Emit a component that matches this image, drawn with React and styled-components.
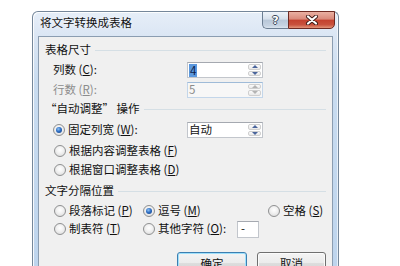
import React from 'react';
import styled, { createGlobalStyle } from 'styled-components';

const Global = createGlobalStyle`
  html, body { margin: 0; padding: 0; background: #ffffff; }
  body { font-family: "Noto Sans CJK SC", "Noto Sans", sans-serif; }
`;

const Page = styled.div`
  width: 400px;
  height: 266px;
  overflow: hidden;
  box-sizing: border-box;
  padding: 11px 0 0 32px;
`;

const Window = styled.div`
  width: 307px;
  height: 270px;
  box-sizing: border-box;
  border: 1px solid #75879a;
  border-bottom: none;
  border-radius: 6px 6px 0 0;
  background: linear-gradient(to bottom, #e6eef8 0px, #dbe6f4 24px, #c9dcf0 70px, #bdd4ed 100%);
  box-shadow: inset 1px 1px 0 rgba(255, 255, 255, 0.85), inset -1px 0 0 rgba(255, 255, 255, 0.6);
  display: flex;
  flex-direction: column;
`;

const TitleBar = styled.div`
  height: 24px;
  display: flex;
  align-items: flex-start;
  padding-left: 7px;
`;

const Title = styled.div`
  margin-top: 3px;
  font-size: 11.5px;
  line-height: 15px;
  color: #111;
  text-shadow: 0 0 4px rgba(255, 255, 255, 0.9);
`;

const Controls = styled.div`
  margin-left: auto;
  margin-right: 3px;
  margin-top: -1px;
  display: flex;
`;

const HelpBtn = styled.div`
  width: 26px;
  height: 18px;
  box-sizing: border-box;
  border: 1px solid #6c7e92;
  border-right: none;
  border-radius: 0 0 0 5px;
  background: linear-gradient(to bottom, #eef3f9 0%, #d6e0eb 45%, #b8c7d8 50%, #c6d3e2 85%, #dbe5ef 100%);
  display: flex;
  align-items: center;
  justify-content: center;
  font-family: "DejaVu Sans", sans-serif;
  font-weight: bold;
  font-size: 11px;
  color: #ffffff;
  text-shadow: 1px 0 0 #3b4a5c, -1px 0 0 #3b4a5c, 0 1px 0 #3b4a5c, 0 -1px 0 #3b4a5c;
`;

const CloseBtn = styled.div`
  width: 47px;
  height: 18px;
  box-sizing: border-box;
  border: 1px solid #6e2a22;
  border-radius: 0 0 5px 0;
  background: linear-gradient(to bottom, #eab0a2 0%, #d9897a 45%, #c4412e 50%, #c9523d 80%, #e3957a 100%);
  display: flex;
  align-items: center;
  justify-content: center;
`;

const Client = styled.div`
  flex: 1;
  margin: 0 5px;
  border: 1px solid #8b9db1;
  border-bottom: none;
  background: #f0f0f0;
  padding: 3px 5px 0 6px;
  display: flex;
  flex-direction: column;
  font-size: 11.5px;
  line-height: 1;
  color: #111;
`;

const Section = styled.div`
  height: ${p => p.h}px;
  display: flex;
  align-items: center;
  white-space: nowrap;
  &::after {
    content: "";
    flex: 1;
    height: 1px;
    margin-left: 4px;
    margin-right: 1px;
    background: #d5dfe5;
  }
`;

const FieldRow = styled.div`
  height: ${p => p.h}px;
  display: grid;
  grid-template-columns: 134px auto;
  align-items: center;
  padding-left: 8px;
`;

const RadioGrid = styled.div`
  height: ${p => p.h}px;
  display: grid;
  grid-template-columns: 89px 125px auto;
  align-items: center;
  padding-left: 9px;
`;

const Option = styled.div`
  display: flex;
  align-items: center;
  white-space: nowrap;
  grid-column: span ${p => p.span || 1};
`;

const Label = styled.span`
  white-space: nowrap;
  color: ${p => (p.disabled ? '#8c8c8c' : '#111')};
`;

const OtherLabel = styled.span`
  width: 79px;
  white-space: nowrap;
`;

const Radio = styled.span`
  width: 12px;
  height: 12px;
  box-sizing: border-box;
  border-radius: 50%;
  border: 1px solid #8f9091;
  background: radial-gradient(circle at 50% 40%, #ffffff 0%, #f2f2f2 40%, #d6d6d6 100%);
  margin-right: 3px;
  display: flex;
  align-items: center;
  justify-content: center;
  flex-shrink: 0;
  &::after {
    content: "";
    display: ${p => (p.checked ? 'block' : 'none')};
    width: 6px;
    height: 6px;
    border-radius: 50%;
    background: radial-gradient(circle at 40% 35%, #8fc3f5 0%, #2f6fc4 45%, #123a7d 100%);
  }
`;

const Field = styled.div`
  width: 76px;
  height: 16px;
  box-sizing: border-box;
  border: 1px solid ${p => (p.disabled ? '#c3d6ea' : '#c2c6cc')};
  border-top-color: ${p => (p.disabled ? '#9fbbd8' : '#a5a9b0')};
  background: ${p => (p.disabled ? '#f7f7f7' : '#ffffff')};
  display: flex;
  align-items: stretch;
`;

const FieldText = styled.div`
  flex: 1;
  display: flex;
  align-items: center;
  padding-left: 1px;
  font-size: 11.5px;
  color: ${p => (p.disabled ? '#8c8c8c' : '#111')};
`;

const Selected = styled.span`
  background: #5b98de;
  color: #0c1d4a;
  padding: 0 1px;
  line-height: 13px;
`;

const Spin = styled.div`
  width: 13px;
  display: flex;
  flex-direction: column;
  gap: 1px;
  padding: 1px 1px 1px 0;
`;

const SpinBtn = styled.div`
  flex: 1;
  border: 1px solid #cfcfcf;
  border-radius: 2px;
  background: linear-gradient(to bottom, #fbfbfb, #e9e9e9);
  display: flex;
  align-items: center;
  justify-content: center;
  &::after {
    content: "";
    width: 0;
    height: 0;
    border-left: 3px solid transparent;
    border-right: 3px solid transparent;
    ${p => (p.down ? 'border-top' : 'border-bottom')}: 3px solid ${p => (p.disabled ? '#b3b3b3' : '#4a659b')};
  }
`;

const CharBox = styled.div`
  width: 22px;
  height: 17px;
  box-sizing: border-box;
  border: 1px solid #c2c6cc;
  border-top-color: #a5a9b0;
  background: #ffffff;
  display: flex;
  align-items: center;
  padding-left: 3px;
`;

const ButtonRow = styled.div`
  margin-top: 14px;
  padding-left: 132px;
  display: flex;
  gap: 10px;
`;

const Button = styled.div`
  width: ${p => p.w}px;
  height: 23px;
  box-sizing: border-box;
  border: 1px solid ${p => (p.primary ? '#3c7fb1' : '#707070')};
  border-radius: 3px;
  background: linear-gradient(to bottom, #f4f4f4 0%, #ebebeb 50%, #dddddd 50%, #cfcfcf 100%);
  box-shadow: ${p => (p.primary ? 'inset 0 0 0 1px #9fe0fb' : 'inset 0 0 0 1px #fbfbfb')};
  display: flex;
  align-items: center;
  justify-content: center;
  font-size: 11.5px;
  color: #111;
`;

const Acc = ({ k }) => (
  <> (<u>{k}</u>)</>
);

const SpinField = ({ children, disabled }) => (
  <Field disabled={disabled}>
    <FieldText disabled={disabled}>{children}</FieldText>
    <Spin>
      <SpinBtn disabled={disabled} />
      <SpinBtn down disabled={disabled} />
    </Spin>
  </Field>
);

export default function App() {
  return (
    <>
      <Global />
      <Page>
        <Window>
          <TitleBar>
            <Title>将文字转换成表格</Title>
            <Controls>
              <HelpBtn>?</HelpBtn>
              <CloseBtn>
                <svg width="14" height="10" viewBox="0 0 14 10">
                  <path d="M3 1.5 L11 8.5 M11 1.5 L3 8.5" stroke="#3b1a16" strokeWidth="4" strokeLinecap="round" />
                  <path d="M3 1.5 L11 8.5 M11 1.5 L3 8.5" stroke="#ffffff" strokeWidth="2.2" strokeLinecap="round" />
                </svg>
              </CloseBtn>
            </Controls>
          </TitleBar>
          <Client>
            <Section h={20}>表格尺寸</Section>
            <FieldRow h={20}>
              <Label>列数<Acc k="C" />:</Label>
              <SpinField><Selected>4</Selected></SpinField>
            </FieldRow>
            <FieldRow h={19}>
              <Label disabled>行数<Acc k="R" />:</Label>
              <SpinField disabled>5</SpinField>
            </FieldRow>
            <Section h={20}>“自动调整” 操作</Section>
            <FieldRow h={22}>
              <Option><Radio checked /><Label>固定列宽<Acc k="W" />:</Label></Option>
              <SpinField>自动</SpinField>
            </FieldRow>
            <RadioGrid h={19}>
              <Option span={3}><Radio /><Label>根据内容调整表格<Acc k="F" /></Label></Option>
            </RadioGrid>
            <RadioGrid h={20}>
              <Option span={3}><Radio /><Label>根据窗口调整表格<Acc k="D" /></Label></Option>
            </RadioGrid>
            <Section h={22}>文字分隔位置</Section>
            <RadioGrid h={18}>
              <Option><Radio /><Label>段落标记<Acc k="P" /></Label></Option>
              <Option><Radio checked /><Label>逗号<Acc k="M" /></Label></Option>
              <Option><Radio /><Label>空格<Acc k="S" /></Label></Option>
            </RadioGrid>
            <RadioGrid h={18}>
              <Option><Radio /><Label>制表符<Acc k="T" /></Label></Option>
              <Option span={2}>
                <Radio />
                <OtherLabel>其他字符<Acc k="O" />:</OtherLabel>
                <CharBox>-</CharBox>
              </Option>
            </RadioGrid>
            <ButtonRow>
              <Button primary w={70}>确定</Button>
              <Button w={69}>取消</Button>
            </ButtonRow>
          </Client>
        </Window>
      </Page>
    </>
  );
}
